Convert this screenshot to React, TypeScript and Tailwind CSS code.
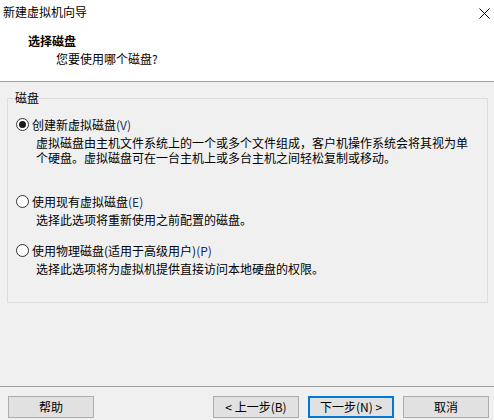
const font = { fontFamily: '"Noto Sans CJK SC", "Microsoft YaHei", sans-serif' };

function Radio({ checked }: { checked?: boolean }) {
  return (
    <span className="flex h-[13px] w-[13px] shrink-0 items-center justify-center rounded-full border border-[#333333] bg-white">
      {checked && <span className="h-[7px] w-[7px] rounded-full bg-[#1a1a1a]" />}
    </span>
  );
}

function Option({
  label,
  hotkey,
  lines,
  checked,
  className,
}: {
  label: string;
  hotkey: string;
  lines: string[];
  checked?: boolean;
  className?: string;
}) {
  return (
    <div className={className}>
      <label className="flex items-center gap-[3px] leading-[15px]">
        <Radio checked={checked} />
        <span>
          {label}
          <span className="text-[#1c2a5c]">{hotkey}</span>
        </span>
      </label>
      <div className="mt-[3px] pl-[20px] leading-[15px]">
        {lines.map((l) => (
          <div key={l} className="whitespace-nowrap">
            {l}
          </div>
        ))}
      </div>
    </div>
  );
}

function Button({ children, primary }: { children: React.ReactNode; primary?: boolean }) {
  return (
    <button
      className={`flex h-[22px] w-[86px] items-center justify-center bg-[#e1e1e1] leading-[14px] text-black ${
        primary ? "border-2 border-[#0078d7]" : "border border-[#adadad]"
      }`}
    >
      {children}
    </button>
  );
}

export default function App() {
  return (
    <div
      className="flex h-[420px] w-[494px] flex-col overflow-hidden bg-[#f0f0f0] text-[12px] text-black"
      style={font}
    >
      {/* Header */}
      <header className="h-[82px] shrink-0 border-b border-[#a0a0a0] bg-white">
        <div className="flex items-center justify-between pl-[3px] pr-[4px] pt-[5px]">
          <span className="leading-[14px]">新建虚拟机向导</span>
          <svg width="11" height="11" viewBox="0 0 11 11" className="mt-[2px]">
            <path d="M0.5 0.5 L10.5 10.5 M10.5 0.5 L0.5 10.5" stroke="#000" strokeWidth="1" />
          </svg>
        </div>
        <div className="mt-[15px] pl-[28px] font-bold leading-[14px]">选择磁盘</div>
        <div className="mt-[4px] pl-[56px] leading-[14px]">您要使用哪个磁盘?</div>
      </header>

      {/* Disk group */}
      <fieldset className="ml-[7px] mt-[9px] h-[212px] w-[481px] shrink-0 border border-[#dcdcdc] pl-[8px]">
        <legend className="ml-[-1px] px-[0px] leading-[14px]">磁盘</legend>
        <Option
          className="mt-[12px]"
          checked
          label="创建新虚拟磁盘"
          hotkey="(V)"
          lines={[
            "虚拟磁盘由主机文件系统上的一个或多个文件组成，客户机操作系统会将其视为单",
            "个硬盘。虚拟磁盘可在一台主机上或多台主机之间轻松复制或移动。",
          ]}
        />
        <Option
          className="mt-[29px]"
          label="使用现有虚拟磁盘"
          hotkey="(E)"
          lines={["选择此选项将重新使用之前配置的磁盘。"]}
        />
        <Option
          className="mt-[16px]"
          label="使用物理磁盘(适用于高级用户)"
          hotkey="(P)"
          lines={["选择此选项将为虚拟机提供直接访问本地硬盘的权限。"]}
        />
      </fieldset>

      <div className="flex-1" />

      {/* Footer */}
      <footer className="flex h-[34px] shrink-0 items-start border-t border-[#a0a0a0] pl-[8px] pr-[5px] pt-[9px]">
        <Button>帮助</Button>
        <div className="flex-1" />
        <div className="flex gap-[9px]">
          <Button>&lt; 上一步(B)</Button>
          <Button primary>下一步(N) &gt;</Button>
          <Button>取消</Button>
        </div>
      </footer>
    </div>
  );
}
